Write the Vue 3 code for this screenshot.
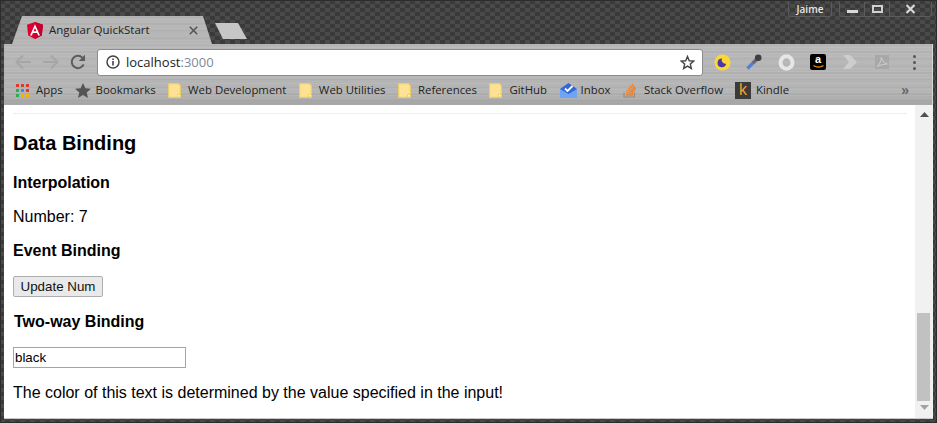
<script setup>
const bookmarks = [
  { type: 'apps', label: 'Apps' },
  { type: 'star', label: 'Bookmarks' },
  { type: 'folder', label: 'Web Development' },
  { type: 'folder', label: 'Web Utilities' },
  { type: 'folder', label: 'References' },
  { type: 'folder', label: 'GitHub' },
  { type: 'inbox', label: 'Inbox' },
  { type: 'so', label: 'Stack Overflow' },
  { type: 'kindle', label: 'Kindle' }
]
const appColors = ['#e0392b', '#e0392b', '#e0392b', '#34a853', '#4285f4', '#e0392b', '#34a853', '#f4b400', '#f4b400']
</script>

<template>
  <div class="window">
    <header class="titlebar">
      <div class="caption">
        <div class="user">Jaime</div>
        <div class="controls">
          <div class="ctl ctl-min"><span class="min-glyph"></span></div>
          <div class="ctl ctl-max"><span class="max-glyph"></span></div>
          <div class="ctl ctl-close">
            <svg width="11" height="10" viewBox="0 0 11 10"><path d="M1.5 1l8 8M9.5 1l-8 8" stroke="#d8d8d8" stroke-width="2.2" fill="none"/></svg>
          </div>
        </div>
      </div>
      <div class="tabstrip">
        <div class="tab">
          <svg class="ng" width="16" height="17" viewBox="0 0 16 17">
            <path d="M8 0L0 2.8l1.2 10.6L8 17l6.8-3.6L16 2.8z" fill="#dd0031"/>
            <path d="M8 0v17l6.8-3.6L16 2.8z" fill="#c3002f"/>
            <path d="M8 2.2L3 13.4h1.9l1-2.5h4.2l1 2.5H13zM6.6 9.3L8 5.9l1.4 3.4z" fill="#fff"/>
          </svg>
          <span class="tab-title">Angular QuickStart</span>
          <svg class="tab-x" width="9" height="9" viewBox="0 0 9 9"><path d="M.8.8l7.4 7.4M8.2.8L.8 8.2" stroke="#555" stroke-width="1.6"/></svg>
        </div>
        <div class="newtab"></div>
      </div>
    </header>

    <div class="chrome">
      <div class="toolbar">
        <div class="nav">
          <svg width="18" height="16" viewBox="0 0 18 16"><path d="M17 8H3M9 1.5L2.5 8 9 14.5" stroke="#a6a6a6" stroke-width="2" fill="none"/></svg>
          <svg width="18" height="16" viewBox="0 0 18 16"><path d="M1 8h14M9 1.5L15.5 8 9 14.5" stroke="#a6a6a6" stroke-width="2" fill="none"/></svg>
          <svg width="16" height="16" viewBox="0 0 16 16"><path d="M13.6 10.5A6.2 6.2 0 1 1 12.4 3.6" stroke="#5c5c5c" stroke-width="2" fill="none"/><path d="M15 0.8v6.2H8.8z" fill="#5c5c5c"/></svg>
        </div>
        <div class="omnibox">
          <svg width="14" height="14" viewBox="0 0 14 14"><circle cx="7" cy="7" r="6" stroke="#444" stroke-width="1.5" fill="none"/><path d="M7 6v4.4M7 3.4v1.5" stroke="#444" stroke-width="1.6"/></svg>
          <span class="url">localhost<span class="port">:3000</span></span>
          <svg class="omni-star" width="15" height="15" viewBox="0 0 16 16"><path d="M8 1.6l1.9 4.500 4.800.4-3.700 3.100 1.100 4.700L8 11.800l-4.100 2.500L5 9.600 1.300 6.500l4.800-.4z" stroke="#444" stroke-width="1.500" fill="none"/></svg>
        </div>
        <div class="exts">
          <div class="ext">
            <svg width="17" height="17" viewBox="0 0 17 17"><circle cx="8.500" cy="8.500" r="8" fill="#fdd835"/><path d="M12.200 9.800A4 4 0 0 1 8 4.400a4.400 4.400 0 1 0 4.200 5.400z" fill="#4a3aa8"/></svg>
          </div>
          <div class="ext">
            <svg width="18" height="18" viewBox="0 0 18 18"><path d="M2.500 15.500l6-6" stroke="#4f7fdc" stroke-width="3.200" fill="none"/><path d="M8 10l4-4" stroke="#6a6a6a" stroke-width="3.600" fill="none"/><circle cx="13.200" cy="4.800" r="3.300" fill="#3f3f3f"/></svg>
          </div>
          <div class="ext">
            <svg width="17" height="17" viewBox="0 0 17 17"><ellipse cx="8.500" cy="8.500" rx="6" ry="6.300" stroke="#e6e6e6" stroke-width="4" fill="none"/></svg>
          </div>
          <div class="ext">
            <div class="amazon"><span class="amazon-a">a</span><svg width="11" height="3" viewBox="0 0 11 3"><path d="M.5.500c3 2 7 2 10 0" stroke="#f90" stroke-width="1.200" fill="none"/></svg></div>
          </div>
          <div class="ext">
            <svg width="16" height="14" viewBox="0 0 16 14"><path d="M1 0h7l7 7-7 7H1l6-7z" fill="#cdcdcd"/></svg>
          </div>
          <div class="ext">
            <svg width="14" height="14" viewBox="0 0 14 14"><rect width="14" height="14" fill="#a8a8a8"/><path d="M2 11.500c2-1 4-5 4.400-9 .5 3 3 6 6 6.500-3 0-7 1-10.400 2.500z" stroke="#cfcfcf" stroke-width="1" fill="none"/></svg>
          </div>
          <div class="ext dots"><i></i><i></i><i></i></div>
        </div>
      </div>

      <nav class="bookmarks">
        <div v-for="b in bookmarks" :key="b.label" class="bm" :class="'bm-' + b.type">
          <div v-if="b.type === 'apps'" class="apps-grid">
            <i v-for="(c, n) in appColors" :key="n" :style="{ background: c }"></i>
          </div>
          <svg v-else-if="b.type === 'star'" width="16" height="15" viewBox="0 0 16 15"><path d="M8 0l2.400 5.300 5.600.5-4.300 3.700 1.300 5.500L8 12l-5 3 1.300-5.500L0 5.800l5.600-.5z" fill="#555"/></svg>
          <svg v-else-if="b.type === 'folder'" width="13" height="15" viewBox="0 0 13 15"><path d="M.7.7h9.600l2 2v11.600H.7z" fill="#fde293" stroke="#f0cf60" stroke-width="1.200"/><path d="M9.500 14V11.500h3" fill="#fff" stroke="#f0cf60"/></svg>
          <svg v-else-if="b.type === 'inbox'" width="17" height="15" viewBox="0 0 17 15"><path d="M0 6l8.500-6L17 6v9H0z" fill="#3367d6"/><path d="M0 6l8.500 5L17 6v9H0z" fill="#6ea4f5"/><path d="M5 5.500l2.500 2.500L12.500 3" stroke="#fff" stroke-width="1.800" fill="none"/></svg>
          <svg v-else-if="b.type === 'so'" width="14" height="16" viewBox="0 0 14 16"><path d="M1 10.500v4.500h10.500v-4.500" stroke="#9a8a7a" stroke-width="1.200" fill="none"/><path d="M3 13h7M3.200 10.800l7 .6M3.800 8.400l6.800 1.800M5 6l6 3.300M6.800 3.800l5 4.500M9 1.800l3.600 5.600" stroke="#f48024" stroke-width="1.300"/></svg>
          <div v-else class="kindle-ico">k</div>
          <span>{{ b.label }}</span>
        </div>
        <span class="more">»</span>
      </nav>
    </div>

    <div class="viewport">
      <main class="page">
        <hr class="rule" />
        <h2>Data Binding</h2>
        <h3>Interpolation</h3>
        <p>Number: 7</p>
        <h3 class="event">Event Binding</h3>
        <button class="btn">Update Num</button>
        <h3 class="twoway">Two-way Binding</h3>
        <input class="field" value="black" />
        <p class="last">The color of this text is determined by the value specified in the input!</p>
      </main>
      <aside class="scrollbar">
        <svg width="9" height="5" viewBox="0 0 9 5"><path d="M4.500 0L9 5H0z" fill="#505050"/></svg>
        <div class="track"><div class="thumb"></div></div>
        <svg width="9" height="5" viewBox="0 0 9 5"><path d="M4.500 5L9 0H0z" fill="#a3a3a3"/></svg>
      </aside>
    </div>
  </div>
</template>

<style scoped>
.window {
  width: 937px;
  height: 423px;
  box-sizing: border-box;
  padding: 0 4px 4px 4px;
  display: flex;
  flex-direction: column;
  overflow: hidden;
  background-color: #404040;
  background-image: repeating-conic-gradient(#4a4a4a 0 25%, #3a3a3a 0 50%);
  background-size: 10px 8px;
  box-shadow: inset 0 0 0 1px #2c2c2c;
}
.titlebar {
  height: 44px;
  flex: none;
  display: flex;
  flex-direction: column;
}
.caption {
  height: 16px;
  display: flex;
  justify-content: flex-end;
  gap: 7px;
  padding-top: 2px;
  padding-right: 1px;
  box-sizing: border-box;
}
.user {
  width: 44px;
  height: 15px;
  box-sizing: border-box;
  border: 1px solid #5c5c5c;
  border-top: none;
  border-radius: 0 0 3px 3px;
  color: #e6e6e6;
  font: 600 10px/14px "Open Sans", sans-serif;
  text-align: center;
}
.controls {
  display: flex;
  height: 15px;
  border: 1px solid #5c5c5c;
  border-top: none;
  border-radius: 0 0 3px 3px;
  box-sizing: border-box;
}
.ctl {
  display: flex;
  align-items: center;
  justify-content: center;
  height: 14px;
  border-right: 1px solid #5c5c5c;
  box-sizing: border-box;
}
.ctl-min { width: 25px; }
.ctl-max { width: 25px; }
.ctl-close { width: 41px; border-right: none; }
.min-glyph { width: 11px; height: 3px; margin-top: 5px; background: #d8d8d8; }
.max-glyph { width: 11px; height: 8px; border: 2px solid #d0d0d0; box-sizing: border-box; }
.tabstrip {
  height: 28px;
  display: flex;
  align-items: flex-start;
  padding-left: 8px;
}
.tab {
  width: 200px;
  height: 28px;
  box-sizing: border-box;
  padding: 6px 13px 0 15px;
  display: flex;
  align-items: flex-start;
  clip-path: polygon(0 100%, 10px 0, 191px 0, 200px 100%);
  background-color: #b6b6b6;
  background-image:
    repeating-linear-gradient(180deg, rgba(255,255,255,.05) 0 1px, transparent 1px 3px),
    repeating-linear-gradient(180deg, rgba(0,0,0,.03) 0 2px, transparent 2px 7px);
}
.ng { flex: none; }
.tab-title {
  margin-left: 6px;
  font: 11.500px/16px "Open Sans", sans-serif;
  color: #222;
  white-space: nowrap;
}
.tab-x { margin-left: auto; margin-top: 4px; margin-right: 1px; }
.newtab {
  width: 33px;
  height: 16px;
  margin: 7px 0 0 3px;
  background: #c6c6c6;
  clip-path: polygon(0 0, 23px 0, 32px 100%, 8px 100%);
}
.chrome {
  height: 61px;
  flex: none;
  display: flex;
  flex-direction: column;
  background-color: #b4b4b4;
  background-image:
    repeating-linear-gradient(180deg, rgba(255,255,255,.05) 0 1px, transparent 1px 3px),
    repeating-linear-gradient(180deg, rgba(0,0,0,.03) 0 2px, transparent 2px 7px),
    linear-gradient(180deg, #b8b8b8 0, #b4b4b4 80%, #a4a4a4 100%);
  border-right: 1px solid #d6d6d6;
}
.toolbar {
  height: 33px;
  display: flex;
  align-items: center;
  padding-top: 3px;
  box-sizing: border-box;
}
.nav {
  width: 93px;
  display: flex;
  align-items: center;
  gap: 10px;
  padding-left: 10px;
  box-sizing: border-box;
  flex: none;
}
.omnibox {
  width: 606px;
  height: 27px;
  flex: none;
  box-sizing: border-box;
  padding: 0 7px 0 8px;
  background: #fff;
  border: 1px solid #8c8c8c;
  border-radius: 3px;
  display: flex;
  align-items: center;
}
.url {
  margin-left: 6px;
  font: 13px/18px "Open Sans", sans-serif;
  color: #222;
}
.port { color: #7e8a96; }
.omni-star { margin-left: auto; }
.exts {
  display: flex;
  align-items: center;
  padding-left: 3px;
}
.ext {
  width: 32px;
  height: 20px;
  display: flex;
  align-items: center;
  justify-content: center;
}
.amazon {
  width: 16px;
  height: 16px;
  background: #000;
  border-radius: 2px;
  display: flex;
  flex-direction: column;
  align-items: center;
}
.amazon-a {
  font: bold 11px/11px "Liberation Sans", sans-serif;
  color: #fff;
}
.dots { flex-direction: column; gap: 3px; }
.dots i { width: 3px; height: 3px; border-radius: 50%; background: #555; }
.bookmarks {
  height: 28px;
  display: flex;
  align-items: center;
  padding-left: 12px;
  padding-bottom: 2px;
  box-sizing: border-box;
  font: 11.400px/16px "Open Sans", sans-serif;
  color: #222;
  white-space: nowrap;
}
.bm { display: flex; align-items: center; gap: 7px; margin-right: 12.500px; }
.bm-inbox { gap: 4px; }
.bm-star { gap: 5px; }
.bm-kindle { gap: 5px; }
.bm-apps { margin-right: 12px; }
.bm-so { margin-right: 12px; }
.apps-grid {
  width: 13px;
  height: 13px;
  display: grid;
  grid-template-columns: repeat(3, 3px);
  grid-auto-rows: 3px;
  gap: 2px;
}
.kindle-ico {
  width: 16px;
  height: 17px;
  background: #3a3a3a;
  color: #f0a030;
  font: 16px/16px "Liberation Sans", sans-serif;
  text-align: center;
}
.more {
  margin-left: auto;
  margin-right: 23px;
  font: bold 14px/14px "Liberation Sans", sans-serif;
  color: #666;
}
.viewport {
  flex: 1;
  min-height: 0;
  display: flex;
  background: #fff;
  border-bottom: 1px solid #c8c8c8;
}
.page {
  flex: 1;
  min-width: 0;
  box-sizing: border-box;
  padding: 8px 8px 0 9px;
  font: 16px/18px "Liberation Sans", sans-serif;
  color: #000;
}
.rule {
  margin: 0;
  border: none;
  height: 1px;
  background: #eeeeee;
}
h2 {
  margin: 18px 0 0;
  font-size: 20px;
  line-height: 23px;
}
h3 {
  margin: 19px 0 0;
  font-size: 16px;
  line-height: 18px;
}
p { margin: 16px 0 0; }
.event { margin-top: 16px; }
.btn {
  display: block;
  margin: 16px 0 0;
  width: 90px;
  height: 21px;
  padding: 0;
  box-sizing: border-box;
  border: 1px solid #adadad;
  border-radius: 2px;
  background: #e9e9e9;
  color: #111;
  font: 13.333px "Liberation Sans", sans-serif;
}
.twoway { margin-top: 16px; margin-left: 1px; }
.field {
  display: block;
  margin: 16px 0 0;
  width: 173px;
  height: 21px;
  box-sizing: border-box;
  padding: 1px 1px;
  border: 1px solid #a5a5a5;
  color: #000;
  font: 13.333px "Liberation Sans", sans-serif;
}
.last { margin-top: 16px; }
.scrollbar {
  width: 18px;
  flex: none;
  box-sizing: border-box;
  background: #f1f1f1;
  display: flex;
  flex-direction: column;
  align-items: center;
  padding: 7px 0 8px;
}
.track {
  flex: 1;
  width: 100%;
  display: flex;
  flex-direction: column;
  justify-content: flex-end;
  box-sizing: border-box;
  padding-left: 2px;
  margin-bottom: 4px;
}
.thumb {
  height: 88px;
  width: 13px;
  background: #c1c1c1;
}
</style>

<style>
html, body { margin: 0; padding: 0; }
</style>
